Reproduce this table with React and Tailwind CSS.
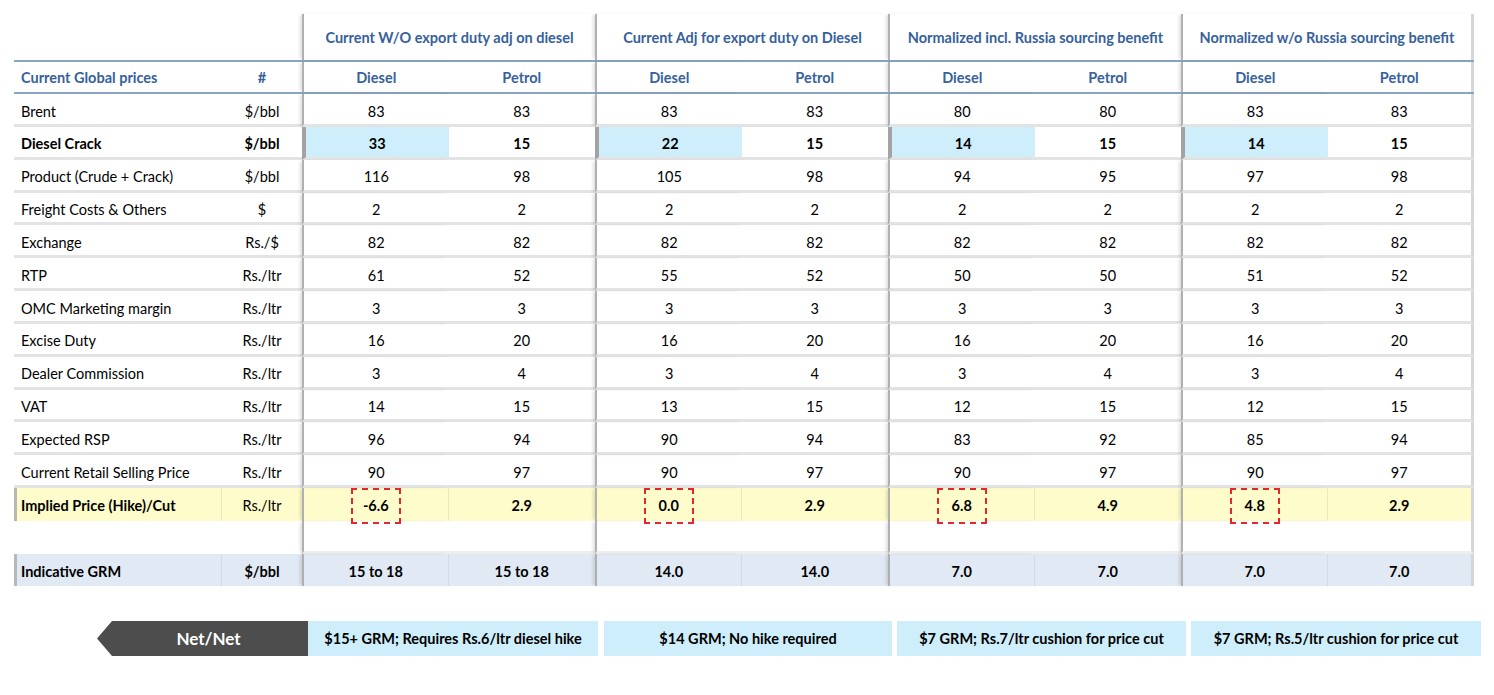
import React from "react";

const groups = [
  "Current W/O export duty adj on diesel",
  "Current Adj for export duty on Diesel",
  "Normalized incl. Russia sourcing benefit",
  "Normalized w/o Russia sourcing benefit",
];

const rows = [
  { label: "Brent", unit: "$/bbl", v: ["83", "83", "83", "83", "80", "80", "83", "83"] },
  { label: "Diesel Crack", unit: "$/bbl", v: ["33", "15", "22", "15", "14", "15", "14", "15"], crack: true },
  { label: "Product (Crude + Crack)", unit: "$/bbl", v: ["116", "98", "105", "98", "94", "95", "97", "98"] },
  { label: "Freight Costs & Others", unit: "$", v: ["2", "2", "2", "2", "2", "2", "2", "2"] },
  { label: "Exchange", unit: "Rs./$", v: ["82", "82", "82", "82", "82", "82", "82", "82"] },
  { label: "RTP", unit: "Rs./ltr", v: ["61", "52", "55", "52", "50", "50", "51", "52"] },
  { label: "OMC Marketing margin", unit: "Rs./ltr", v: ["3", "3", "3", "3", "3", "3", "3", "3"] },
  { label: "Excise Duty", unit: "Rs./ltr", v: ["16", "20", "16", "20", "16", "20", "16", "20"] },
  { label: "Dealer Commission", unit: "Rs./ltr", v: ["3", "4", "3", "4", "3", "4", "3", "4"] },
  { label: "VAT", unit: "Rs./ltr", v: ["14", "15", "13", "15", "12", "15", "12", "15"] },
  { label: "Expected RSP", unit: "Rs./ltr", v: ["96", "94", "90", "94", "83", "92", "85", "94"] },
  { label: "Current Retail Selling Price", unit: "Rs./ltr", v: ["90", "97", "90", "97", "90", "97", "90", "97"] },
];

const implied = ["-6.6", "2.9", "0.0", "2.9", "6.8", "4.9", "4.8", "2.9"];
const grm = ["15 to 18", "15 to 18", "14.0", "14.0", "7.0", "7.0", "7.0", "7.0"];

const GRID = "grid w-[1460px] grid-cols-[208px_80px_repeat(8,146.5px)]";
const VLINE = "border-l-2 border-l-[#b0b0b0] shadow-[-3px_0_3px_-1px_rgba(0,0,0,0.13)]";
const VLINE_DARK = "border-l-4 border-l-[#a3a3a3]";
const RIGHT = "border-r-[3px] border-r-[#d6d6d6]";
const SEP = "border-b-[3px] border-b-[#e3e3e3] pt-[5px]";

function DataCell({ i, children, extra = "", dark = false }) {
  const start = i % 2 === 0;
  return (
    <div
      className={`relative flex items-center justify-center ${start ? (dark ? VLINE_DARK : VLINE) : ""} ${i === 7 ? RIGHT : ""} ${extra}`}
    >
      {children}
    </div>
  );
}

export default function App() {
  return (
    <div className="w-[1494px] h-[695px] bg-white text-black [font-family:Lato,'Noto_Sans',sans-serif] text-[14.5px] pt-[14px] pl-[14px]">
      {/* Header row 1 */}
      <div className={`${GRID} h-[48px] border-b-2 border-b-[#8aa2c4]`}>
        <div className="col-span-2" />
        {groups.map((g, gi) => (
          <div
            key={g}
            className={`col-span-2 flex items-center justify-center pt-[2px] font-bold text-[#36619b] ${VLINE} ${gi === 3 ? RIGHT : ""}`}
          >
            {g}
          </div>
        ))}
      </div>

      {/* Header row 2 */}
      <div className={`${GRID} h-[32px] border-b-2 border-b-[#8aa2c4] font-bold text-[#36619b]`}>
        <div className="flex items-center pl-[7px] pt-[2px]">Current Global prices</div>
        <div className="flex items-center justify-center pt-[2px]">#</div>
        {[0, 1, 2, 3, 4, 5, 6, 7].map((i) => (
          <DataCell key={i} i={i} extra="pt-[2px]">
            {i % 2 === 0 ? "Diesel" : "Petrol"}
          </DataCell>
        ))}
      </div>

      {/* Data rows */}
      {rows.map((r) => (
        <div key={r.label} className={`${GRID} h-[32.85px] ${r.crack ? "font-bold" : ""}`}>
          <div className={`flex items-center pl-[7px] ${SEP}`}>{r.label}</div>
          <div className={`flex items-center justify-center ${SEP}`}>{r.unit}</div>
          {r.v.map((v, i) => (
            <DataCell
              key={i}
              i={i}
              dark={r.crack}
              extra={`${SEP} ${r.crack && i % 2 === 0 ? "bg-[#cdeefa]" : ""}`}
            >
              {v}
            </DataCell>
          ))}
        </div>
      ))}

      {/* Implied row */}
      <div className={`${GRID} h-[32.85px] bg-[#fffccc]`}>
        <div className="flex items-center pl-[4px] pt-[2px] font-bold border-l-[3px] border-l-[#b9b9b0] border-r border-r-[#ebe9bc]">
          Implied Price (Hike)/Cut
        </div>
        <div className="flex items-center justify-center pt-[2px]">Rs./ltr</div>
        {implied.map((v, i) => (
          <DataCell key={i} i={i} extra={`font-bold pt-[2px] ${i % 2 === 0 ? "border-r border-r-[#ebe9bc]" : ""}`}>
            {v}
            {i % 2 === 0 && (
              <div className="absolute top-0 left-1/2 -translate-x-1/2 w-[50px] h-[36px] border-2 border-dashed border-[#e5262c]" />
            )}
          </DataCell>
        ))}
      </div>

      {/* Blank row */}
      <div className={`${GRID} h-[33px]`}>
        <div />
        <div />
        {[0, 1, 2, 3, 4, 5, 6, 7].map((i) => (
          <DataCell key={i} i={i} extra="border-b-[3px] border-b-[#eeeeee]">
            {""}
          </DataCell>
        ))}
      </div>

      {/* GRM row */}
      <div className={`${GRID} h-[32px] bg-[#e1eaf4] font-bold`}>
        <div className="flex items-center pl-[4px] pt-[3px] border-l-[3px] border-l-[#b5b8bc] border-r border-r-[#cfdbe8]">
          Indicative GRM
        </div>
        <div className="flex items-center justify-center pt-[3px]">$/bbl</div>
        {grm.map((v, i) => (
          <DataCell key={i} i={i} extra={`pt-[3px] ${i % 2 === 0 ? "border-r border-r-[#cfdbe8]" : ""}`}>
            {v}
          </DataCell>
        ))}
      </div>

      {/* Bottom bar */}
      <div className="flex mt-[35px] ml-[83px] h-[35px] font-bold text-[14.5px]">
        <div className="w-[211px] bg-[#4d4d4d] text-white text-[17px] flex items-center justify-center pl-[12px] [clip-path:polygon(15px_0,100%_0,100%_100%,15px_100%,0_50%)]">
          Net/Net
        </div>
        <div className="w-[290px] bg-[#cdeefa] flex items-center justify-center">$15+ GRM; Requires Rs.6/ltr diesel hike</div>
        <div className="w-[288px] ml-[6px] bg-[#cdeefa] flex items-center justify-center">$14 GRM; No hike required</div>
        <div className="w-[289px] ml-[5px] bg-[#cdeefa] flex items-center justify-center">$7 GRM; Rs.7/ltr cushion for price cut</div>
        <div className="w-[290px] ml-[5px] bg-[#cdeefa] flex items-center justify-center">$7 GRM; Rs.5/ltr cushion for price cut</div>
      </div>
    </div>
  );
}
